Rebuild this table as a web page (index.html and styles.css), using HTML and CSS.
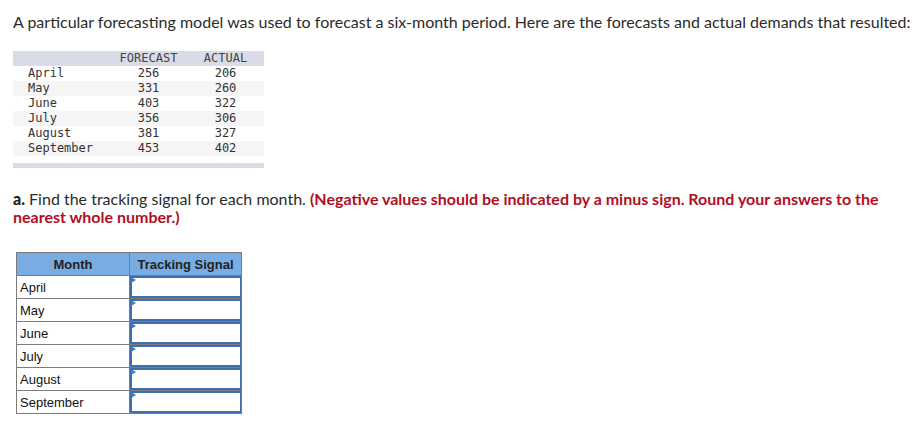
FILE: index.html
```html
<!DOCTYPE html>
<html>
<head>
<meta charset="utf-8">
<link rel="stylesheet" href="styles.css">
</head>
<body>
<p class="intro">A particular forecasting model was used to forecast a six-month period. Here are the forecasts and actual demands that resulted:</p>
<div class="data">
  <div class="drow dhead"><span class="dm"></span><span class="dv">FORECAST</span><span class="dv">ACTUAL</span></div>
  <div class="drow"><span class="dm">April</span><span class="dv">256</span><span class="dv">206</span></div>
  <div class="drow alt"><span class="dm">May</span><span class="dv">331</span><span class="dv">260</span></div>
  <div class="drow"><span class="dm">June</span><span class="dv">403</span><span class="dv">322</span></div>
  <div class="drow alt"><span class="dm">July</span><span class="dv">356</span><span class="dv">306</span></div>
  <div class="drow"><span class="dm">August</span><span class="dv">381</span><span class="dv">327</span></div>
  <div class="drow alt"><span class="dm">September</span><span class="dv">453</span><span class="dv">402</span></div>
  <div class="dfoot"></div>
</div>
<p class="question"><span class="lbl">a.</span> Find the tracking signal for each month. <span class="note">(Negative values should be indicated by a minus sign. Round your answers to the nearest whole number.)</span></p>
<table class="answers">
  <thead>
    <tr><th class="cm">Month</th><th class="ct">Tracking Signal</th></tr>
  </thead>
  <tbody>
    <tr><td class="cm">April</td><td class="ct"><div class="inp"><span class="flag"></span></div></td></tr>
    <tr><td class="cm">May</td><td class="ct"><div class="inp"><span class="flag"></span></div></td></tr>
    <tr><td class="cm">June</td><td class="ct"><div class="inp"><span class="flag"></span></div></td></tr>
    <tr><td class="cm">July</td><td class="ct"><div class="inp"><span class="flag"></span></div></td></tr>
    <tr><td class="cm">August</td><td class="ct"><div class="inp"><span class="flag"></span></div></td></tr>
    <tr><td class="cm">September</td><td class="ct"><div class="inp"><span class="flag"></span></div></td></tr>
  </tbody>
</table>
</body>
</html>
```

FILE: styles.css
```css
html, body {
  margin: 0;
  padding: 0;
  background: #fff;
}
body {
  font-family: Lato, "Open Sans", sans-serif;
  color: #2b2b2b;
}
.intro {
  margin: 0;
  padding: 12px 0 0 13px;
  font-size: 16px;
  line-height: 20px;
  white-space: nowrap;
}
.data {
  margin: 19px 0 0 13px;
  width: 251px;
  font-family: "DejaVu Sans Mono", "Liberation Mono", monospace;
  font-size: 12px;
  color: #333;
}
.drow {
  display: flex;
  height: 15px;
  line-height: 15px;
}
.dhead {
  background: #d9dce6;
  color: #444;
}
.alt {
  background: #f5f5f5;
}
.dm {
  width: 82px;
  padding-left: 15px;
}
.dv {
  width: 77px;
  text-align: center;
}
.dfoot {
  margin-top: 7px;
  height: 5px;
  background: #d9dce6;
}
.question {
  margin: 22px 0 0 13px;
  width: 890px;
  font-size: 16px;
  line-height: 18px;
}
.lbl {
  font-weight: 900;
  color: #222;
}
.note {
  color: #b00f1f;
  font-weight: 700;
}
.answers {
  margin: 26px 0 0 16px;
  border-collapse: collapse;
  font-family: "Liberation Sans", Arial, sans-serif;
  font-size: 13px;
  color: #111;
}
.answers th, .answers td {
  border: 1px solid #7b7b7b;
  padding: 0;
}
.answers th {
  background: #78ace3;
  height: 22px;
  font-weight: 700;
  text-align: center;
  color: #222;
}
.answers td {
  height: 22px;
}
.cm {
  width: 112px;
}
td.cm {
  padding-left: 3px;
  width: 109px;
}
.ct {
  width: 111px;
}
.inp {
  position: relative;
  height: 18px;
  border: 2px solid #3f6fb0;
  border-right-width: 1px;
  margin: 0;
  background: #fff;
}
.flag {
  position: absolute;
  left: -1px;
  top: -1px;
  width: 0;
  height: 0;
  border-top: 3px solid transparent;
  border-bottom: 3px solid transparent;
  border-left: 5px solid #3b7ad0;
}
```
